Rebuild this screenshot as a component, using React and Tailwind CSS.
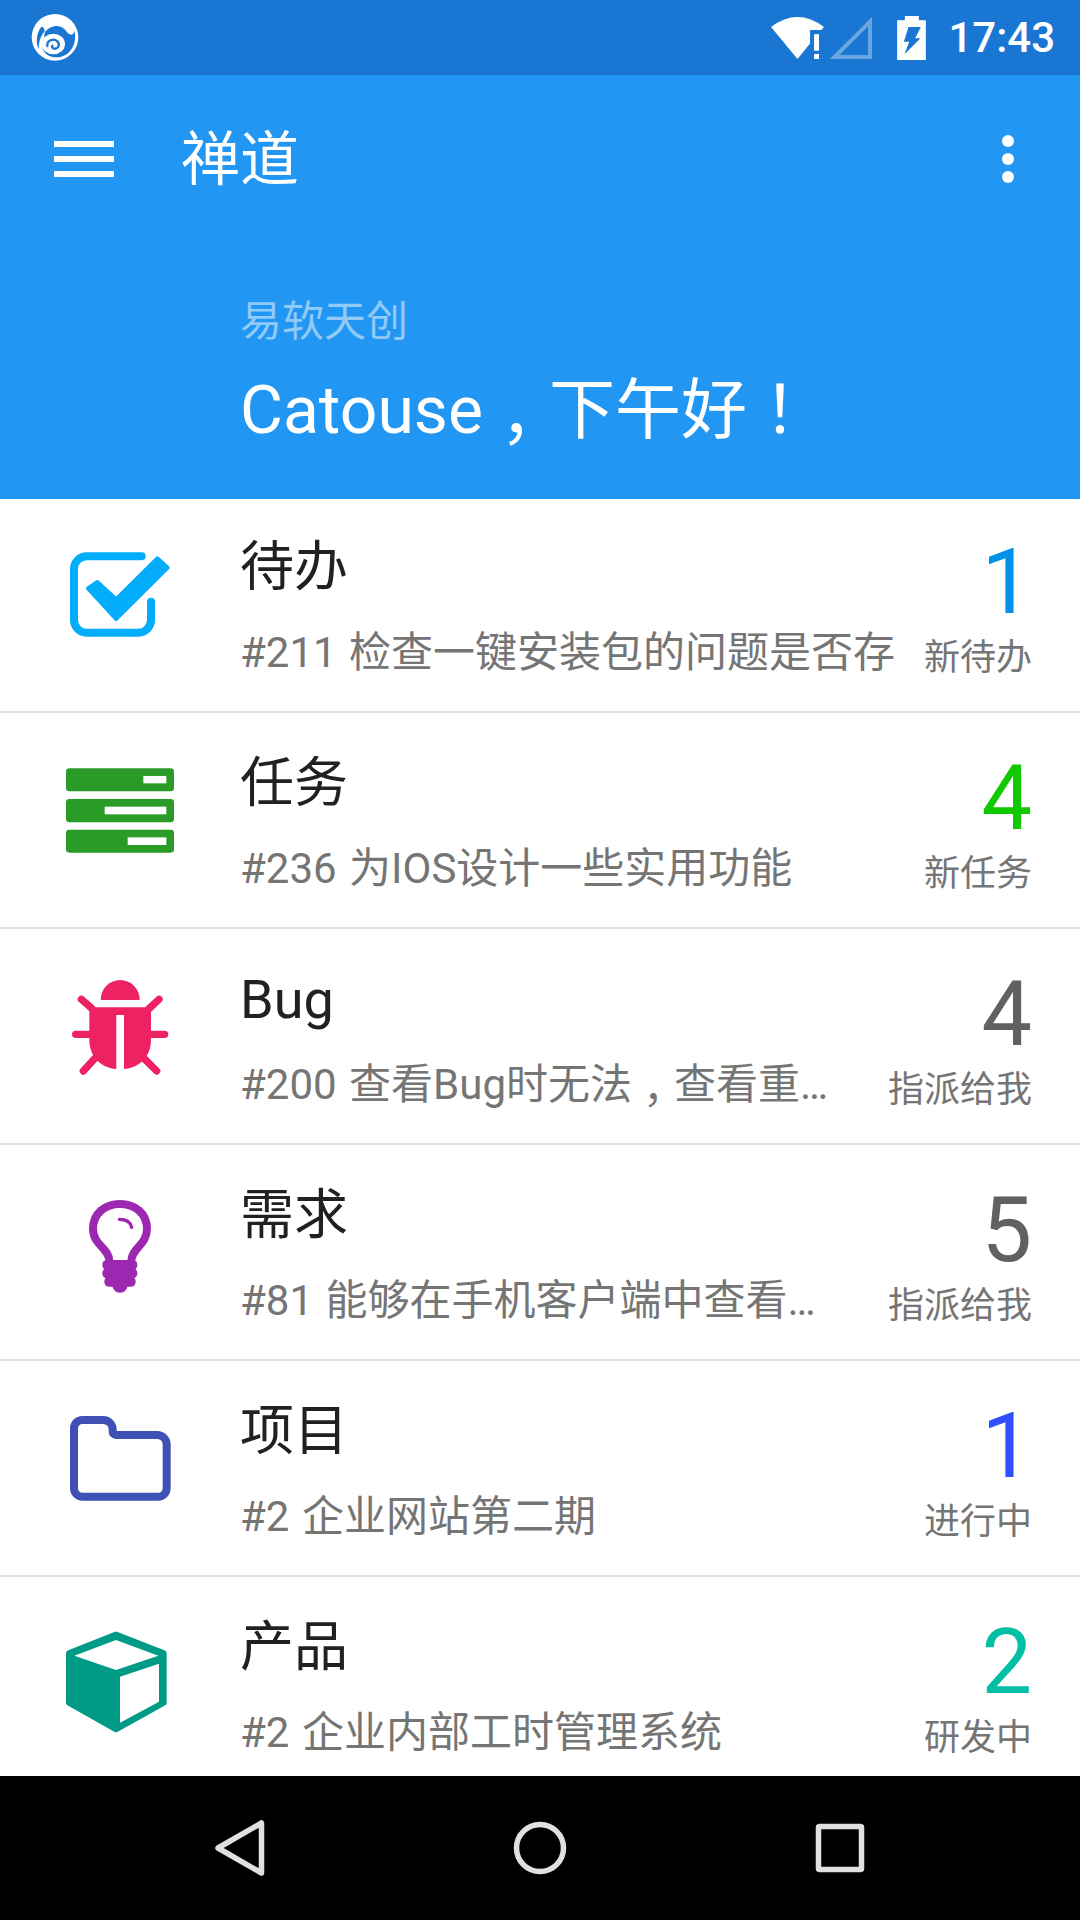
const Logo = () => (
  <svg viewBox="0 0 180 180" className="w-[60px] h-[60px] ml-[24px]">
    <circle cx="93" cy="88" r="70" fill="#fff" />
    {/* main wave */}
    <path
      d="M62 74 C78 50 108 48 124 66 C132 80 148 88 151 68 C162 112 134 150 92 148 C62 146 46 118 58 94 C62 86 60 82 62 74 Z"
      fill="#1976d2"
    />
    <path d="M52 56 C38 74 34 100 44 124 C44 100 50 84 62 70 C62 62 58 56 52 56 Z" fill="#1976d2" />
    {/* spiral */}
    <ellipse cx="88" cy="108" rx="35" ry="31" fill="#fff" />
    <path
      d="M70 114 C68 96 90 90 100 100 C110 110 102 124 90 122 C85 121 83 117 85 113"
      fill="none"
      stroke="#1976d2"
      strokeWidth="7"
      strokeLinecap="round"
    />
  </svg>
);

const StatusBar = () => (
  <div className="h-[75px] bg-[#1976d2] flex items-center justify-between shrink-0">
    <Logo />
    <div className="flex items-center pr-[25px]">
      <svg viewBox="98 48 160 127" className="w-[53px] h-[42px]" fill="#fff">
        <path d="M178 175 L98 78 Q178 18 258 78 L250 87 H216 V128 Z" />
        <rect x="228" y="100" width="15" height="50" />
        <rect x="228" y="160" width="15" height="15" />
      </svg>
      <svg viewBox="275 50 127 127" className="w-[42px] h-[42px] ml-[6px]">
        <path d="M396 64 V171 H289 Z" fill="none" stroke="#fff" strokeOpacity="0.35" strokeWidth="12" />
      </svg>
      <svg viewBox="477 45 86 132" className="w-[29px] h-[44px] ml-[25px]">
        <path d="M500 45 H542 V58 H563 V177 H477 V58 H500 Z" fill="#fff" />
        <path d="M511 78 H548 L531 112 H547 L499 160 L513 122 H497 Z" fill="#1976d2" />
      </svg>
      <span className="ml-[22px] text-[42px] leading-[50px] font-medium text-white">17:43</span>
    </div>
  </div>
);

const Toolbar = () => (
  <div className="h-[168px] flex items-center pl-[54px] pr-[66px]">
    <div className="flex flex-col gap-[9px] w-[60px]">
      <div className="h-[6px] bg-white" />
      <div className="h-[6px] bg-white" />
      <div className="h-[6px] bg-white" />
    </div>
    <div className="ml-[67px] pt-[2px] text-[59px] leading-[70px] text-white flex-1">禅道</div>
    <div className="flex flex-col gap-[6px]">
      <div className="w-[12px] h-[12px] rounded-full bg-white" />
      <div className="w-[12px] h-[12px] rounded-full bg-white" />
      <div className="w-[12px] h-[12px] rounded-full bg-white" />
    </div>
  </div>
);

const CheckIcon = () => (
  <>
    <path
      d="M275 58 H110 A38 38 0 0 0 72 96 V249 A38 38 0 0 0 110 287 H265 A38 38 0 0 0 303 249 V194"
      fill="none"
      stroke="#03adfb"
      strokeWidth="24"
      strokeLinecap="round"
    />
    <path
      d="M114 154 L142 135 L198 187 L322 64 L353 92 L198 246 Z"
      fill="#03adfb"
      stroke="#03adfb"
      strokeWidth="12"
      strokeLinejoin="round"
    />
  </>
);

const TaskIcon = () => (
  <>
    <rect x="48" y="46" width="324" height="69" rx="10" fill="#299b26" />
    <rect x="48" y="138" width="324" height="70" rx="10" fill="#299b26" />
    <rect x="48" y="230" width="324" height="69" rx="10" fill="#299b26" />
    <rect x="280" y="69" width="69" height="22" fill="#fff" />
    <rect x="164" y="161" width="185" height="23" fill="#fff" />
    <rect x="233" y="253" width="116" height="23" fill="#fff" />
  </>
);

const BugIcon = () => (
  <>
    <path d="M152 93 A58.5 60 0 0 1 269 93 Z" fill="#ee2262" />
    <path
      d="M118 115 H303 V213 C303 265 265 298 222 300 V138 H199 V300 C156 298 118 265 118 213 Z"
      fill="#ee2262"
    />
    <path
      d="M94 91 L125 118 M327 91 L296 120 M77 196 H120 M344 196 H303 M100 306 L135 268 M320 306 L282 268"
      stroke="#ee2262"
      strokeWidth="22"
      strokeLinecap="round"
    />
  </>
);

const BulbIcon = () => (
  <>
    <path
      d="M178 228 C178 190 129 180 129 132 C129 85 165 57 210 57 C255 57 291 85 291 132 C291 180 244 190 244 228"
      fill="none"
      stroke="#9c27b0"
      strokeWidth="24"
    />
    <rect x="157" y="225" width="105" height="30" rx="14" fill="#9c27b0" />
    <rect x="157" y="250" width="105" height="30" rx="14" fill="#9c27b0" />
    <rect x="163" y="275" width="94" height="30" rx="14" fill="#9c27b0" />
    <circle cx="210" cy="300" r="23" fill="#9c27b0" />
    <path d="M208 103 Q240 103 245 127" fill="none" stroke="#9c27b0" strokeWidth="10" strokeLinecap="round" />
  </>
);

const FolderIcon = () => (
  <path
    d="M97 57 H160 A28 28 0 0 1 188 85 V92 A10 10 0 0 0 198 102 H322 A28 28 0 0 1 350 130 V262 A25 25 0 0 1 325 287 H97 A25 25 0 0 1 72 262 V82 A25 25 0 0 1 97 57 Z"
    fill="none"
    stroke="#3f51b5"
    strokeWidth="24"
    strokeLinejoin="round"
  />
);

const BoxIcon = () => (
  <>
    <path
      d="M198 52 L342 108 V258 L198 338 L56 258 V108 Z"
      fill="#009b87"
      stroke="#009b87"
      strokeWidth="16"
      strokeLinejoin="round"
    />
    <path d="M198 69 L325 116 L198 159 L73 116 Z" fill="#fff" />
    <path d="M327 140 V254 L210 317 V179 Z" fill="#fff" />
  </>
);

// the phone's font centres full-width punctuation, the TC face does the same.
// leading-[0] so the other face doesn't push the baseline around
const Punct = ({ children, className = "" }) => (
  <span className={`inline-block leading-[0] font-['Noto_Sans_CJK_TC'] ${className}`}>{children}</span>
);

const rows = [
  { title: "待办", desc: "#211 检查一键安装包的问题是否存", num: 1, label: "新待办", color: "text-[#0091ea]", Icon: CheckIcon },
  { title: "任务", desc: "#236 为IOS设计一些实用功能", num: 4, label: "新任务", color: "text-[#10c900]", Icon: TaskIcon },
  {
    title: "Bug",
    desc: (
      <>
        #200 查看Bug时无法<Punct className="translate-y-[16px]">，</Punct>查看重…
      </>
    ),
    num: 4,
    label: "指派给我",
    color: "text-[#616161]",
    Icon: BugIcon,
  },
  { title: "需求", desc: "#81 能够在手机客户端中查看…", num: 5, label: "指派给我", color: "text-[#616161]", Icon: BulbIcon },
  { title: "项目", desc: "#2 企业网站第二期", num: 1, label: "进行中", color: "text-[#304ffe]", Icon: FolderIcon },
  { title: "产品", desc: "#2 企业内部工时管理系统", num: 2, label: "研发中", color: "text-[#00bfa5]", Icon: BoxIcon },
];

const Row = ({ title, desc, num, label, color, Icon }) => (
  <div className="h-[216px] shrink-0 flex items-start border-b-2 border-[#e0e0e0] first:-mt-[2px]">
    <svg viewBox="0 0 390 390" className="w-[130px] h-[130px] ml-[50px] mt-[40px] shrink-0">
      <Icon />
    </svg>
    <div className="ml-[60px] flex-1 min-w-0 pt-[41px]">
      <div className="text-[54px] leading-[60px] text-[#212121]">{title}</div>
      <div className="mt-[25px] text-[42px] leading-[60px] text-[#757575] whitespace-nowrap [word-spacing:2px]">{desc}</div>
    </div>
    <div className="flex flex-col items-end pr-[48px] pt-[36px] shrink-0">
      <div className={`text-[90px] leading-[100px] ${color}`}>{num}</div>
      <div className="text-[36px] leading-[50px] text-[#757575]">{label}</div>
    </div>
  </div>
);

const NavBar = () => (
  <div className="h-[144px] bg-black shrink-0 flex items-center justify-center gap-[240px]">
    <svg viewBox="0 0 60 60" className="w-[60px] h-[60px]" fill="none" stroke="#e0e0e0" strokeWidth="5.5" strokeLinejoin="round">
      <path d="M51.5 5 V55 L8 30 Z" />
    </svg>
    <svg viewBox="0 0 60 60" className="w-[60px] h-[60px]" fill="none" stroke="#e0e0e0" strokeWidth="5.5">
      <circle cx="30" cy="30" r="23.5" />
    </svg>
    <svg viewBox="0 0 60 60" className="w-[60px] h-[60px]" fill="none" stroke="#e0e0e0" strokeWidth="5.5" strokeLinejoin="round">
      <rect x="8.5" y="8.5" width="43" height="43" rx="1" />
    </svg>
  </div>
);

export default function App() {
  return (
    <div className="w-[1080px] h-[1920px] flex flex-col overflow-hidden bg-white font-[Roboto,'Noto_Sans_CJK_SC',sans-serif]">
      <StatusBar />
      <div className="h-[424px] bg-[#2196f3] shrink-0 relative z-10">
        <Toolbar />
        <div className="pl-[240px] pt-[54px]">
          <div className="text-[42px] leading-[50px] text-white/50">易软天创</div>
          <div className="mt-[24px] text-[66px] leading-[80px] text-white">
            Catouse<Punct className="translate-y-[25px]">，</Punct>下午好<Punct>！</Punct>
          </div>
        </div>
      </div>
      <div className="flex-1 min-h-0 overflow-hidden">
        {rows.map((r) => (
          <Row key={r.title} {...r} />
        ))}
      </div>
      <NavBar />
    </div>
  );
}
